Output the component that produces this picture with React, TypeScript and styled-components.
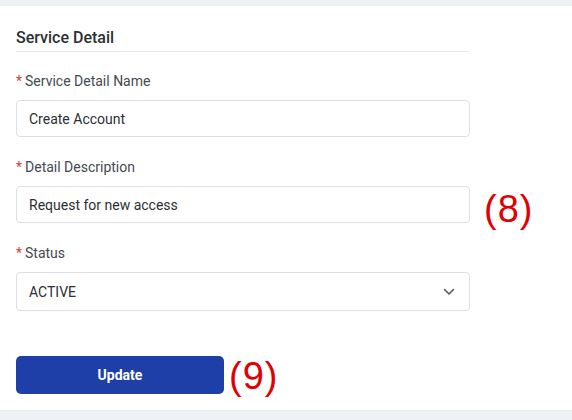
import styled, { createGlobalStyle } from 'styled-components';

const GlobalStyle = createGlobalStyle`
	* {
		box-sizing: border-box;
	}
	body {
		margin: 0;
		background: #eef1f5;
		font-family: Roboto, 'Liberation Sans', sans-serif;
	}
`;

const FIELDS = [
	{ id: 'name', label: 'Service Detail Name', value: 'Create Account' },
	{ id: 'desc', label: 'Detail Description', value: 'Request for new access', note: '(8)' },
];

const App = () => {
	return (
		<>
			<GlobalStyle />
			<Page>
				<Panel>
					<Section>
						<SectionTitle>Service Detail</SectionTitle>
						{FIELDS.map(({ id, label, value, note }) => (
							<FieldRow key={id}>
								<Field>
									<Label>
										<Required>*</Required>
										{label}
									</Label>
									<Input>{value}</Input>
								</Field>
								{note && (
									<Note $offset={14} $shift={6}>
										{note}
									</Note>
								)}
							</FieldRow>
						))}
						<FieldRow>
							<Field>
								<Label>
									<Required>*</Required>
									Status
								</Label>
								<Select>
									ACTIVE
									<svg width="12" height="8" viewBox="0 0 12 8" fill="none">
										<path d="M1.5 1.5 L6 6 L10.5 1.5" stroke="#555" strokeWidth="1.5" strokeLinecap="round" strokeLinejoin="round" />
									</svg>
								</Select>
							</Field>
						</FieldRow>
						<ActionRow>
							<UpdateButton>Update</UpdateButton>
							<Note $offset={5} $shift={1}>
								(9)
							</Note>
						</ActionRow>
					</Section>
				</Panel>
			</Page>
		</>
	);
};
export default App;

const Page = styled.div`
	padding: 6px 0 7px;
	min-height: 420px;
`;

const Panel = styled.div`
	background: #ffffff;
	border-bottom: 1px solid #e9ecef;
	padding: 22px 0 15px 16px;
`;

const Section = styled.div`
	display: flex;
	flex-direction: column;
`;

const SectionTitle = styled.h2`
	width: 454px;
	margin: 0 0 19px;
	padding-bottom: 3px;
	border-bottom: 1px solid #e6e8eb;
	font-size: 16px;
	line-height: 20px;
	font-weight: 500;
	color: #2b2f33;
`;

const FieldRow = styled.div`
	display: flex;
	align-items: flex-end;
	margin-bottom: 20px;
`;

const Field = styled.div`
	width: 454px;
	display: flex;
	flex-direction: column;
	gap: 9px;
`;

const Label = styled.label`
	font-size: 14px;
	line-height: 20px;
	color: #454a50;
`;

const Required = styled.span`
	color: #e03a3a;
	margin-right: 3px;
`;

const Input = styled.div`
	height: 37px;
	display: flex;
	align-items: center;
	padding: 0 12px;
	border: 1px solid #dedfe2;
	border-radius: 4px;
	font-size: 14px;
	color: #2b2f33;
	background: #fff;
`;

const Select = styled(Input)`
	height: 39px;
	justify-content: space-between;
	padding-right: 14px;
`;

const Note = styled.span<{ $offset: number; $shift: number }>`
	margin-left: ${({ $offset }) => $offset}px;
	font-family: 'Liberation Sans', sans-serif;
	font-size: 38px;
	line-height: 40px;
	letter-spacing: 1px;
	color: #e00000;
	transform: translateY(${({ $shift }) => $shift}px);
`;

const ActionRow = styled.div`
	display: flex;
	align-items: center;
	margin-top: 24px;
`;

const UpdateButton = styled.button`
	width: 208px;
	height: 38px;
	border: none;
	border-radius: 5px;
	background: #1e3fa8;
	color: #fff;
	font-family: Roboto, 'Liberation Sans', sans-serif;
	font-size: 14px;
	font-weight: 700;
`;
